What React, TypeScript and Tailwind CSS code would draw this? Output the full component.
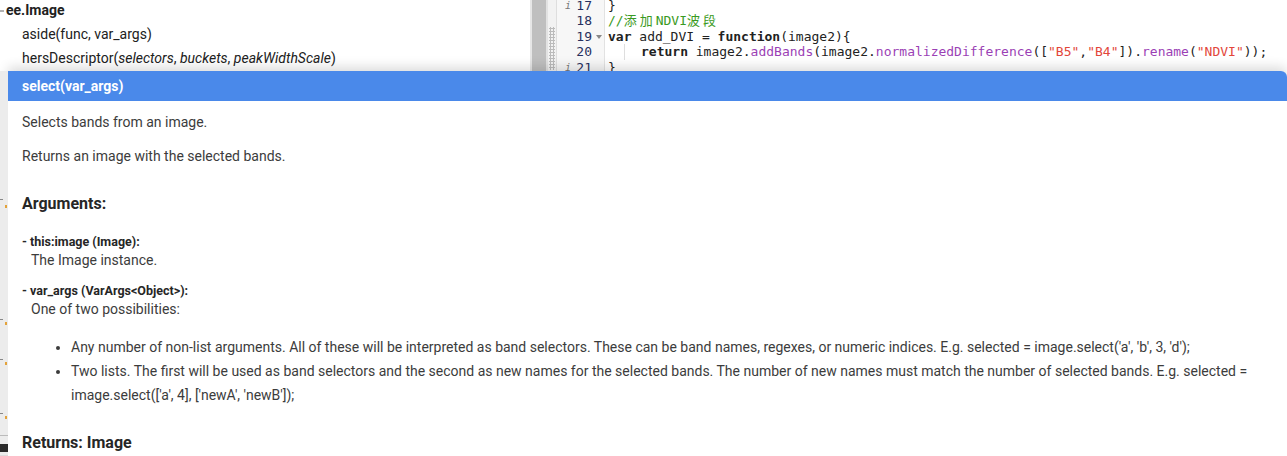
import React from "react";

const font = { fontFamily: "Roboto, 'Liberation Sans', Arial, sans-serif" };
const mono = {
  fontFamily: "'DejaVu Sans Mono', 'Noto Sans CJK SC', monospace",
};

const TreePanel: React.FC = () => (
  <div className="w-[530px] shrink-0 bg-white text-[14px] text-[#212121]" style={font}>
    <div className="flex h-[21px] items-center">
      <svg className="ml-[-3px] h-[8px] w-[8px]" viewBox="0 0 8 8">
        <path d="M1 4h6" stroke="#666" strokeWidth="1" />
      </svg>
      <span className="ml-[1px] font-bold">ee.Image</span>
    </div>
    <div className="mt-[1px] flex h-[24px] items-center pl-[22px]">
      aside(func, var_args)
    </div>
    <div className="flex h-[24px] items-center pl-[22px]">
      <span>
        hersDescriptor(<i>selectors</i>, <i>buckets</i>, <i>peakWidthScale</i>)
      </span>
    </div>
  </div>
);

const Cjk: React.FC<{ children: string }> = ({ children }) => (
  <span className="tracking-[3px]">{children}</span>
);

const codeLines: { n: number; info?: boolean; fold?: boolean; el: React.ReactNode }[] = [
  { n: 17, info: true, el: <span>{"}"}</span> },
  {
    n: 18,
    el: (
      <span className="text-[#3a9a22]">
        //<Cjk>添加</Cjk>NDVI<Cjk>波段</Cjk>
      </span>
    ),
  },
  {
    n: 19,
    fold: true,
    el: (
      <span>
        <b>var</b> add_DVI = <b>function</b>(image2){"{"}
      </span>
    ),
  },
  {
    n: 20,
    el: (
      <span className="flex h-full items-center">
        <span className="ml-[16px] h-full w-[17px] border-l border-[#dedede]" />
        <span>
          <b>return</b> image2.<span className="text-[#9b3fb5]">addBands</span>(image2.
          <span className="text-[#9b3fb5]">normalizedDifference</span>([
          <span className="text-[#e2463a]">"B5"</span>,<span className="text-[#e2463a]">"B4"</span>]).
          <span className="text-[#9b3fb5]">rename</span>(<span className="text-[#e2463a]">"NDVI"</span>));
        </span>
      </span>
    ),
  },
  { n: 21, info: true, el: <span>{"}"}</span> },
];

const CodePanel: React.FC = () => (
  <div className="flex flex-1 bg-white">
    <div className="w-[2px] bg-[#e6e6e6]" />
    <div className="w-[14px] bg-[#bfbfbf]" />
    <div className="w-[2px] bg-[#e2e2e2]" />
    <div className="relative w-[8px] bg-[#f2f2f2]">
      <div className="absolute left-[1px] top-[27px] h-[43px] w-[6px] bg-[radial-gradient(#bbb_1px,transparent_1.2px)] bg-[length:3px_3px]" />
    </div>
    <div className="w-[1px] bg-[#dedede]" />
    <div
      className="mt-[-2px] w-[48px] border-r border-[#e2e2e2] bg-[#f7f7f7] text-[13px] text-[#27305e]"
      style={mono}
    >
      {codeLines.map((l) => (
        <div key={l.n} className="relative flex h-[15.4px] items-center justify-end pr-[12px]">
          {l.info && (
            <span className="absolute left-[8px] text-[10px] italic text-[#777]">i</span>
          )}
          <span>{l.n}</span>
          {l.fold && (
            <svg className="absolute left-[39px] top-[6px] h-[4px] w-[6px]" viewBox="0 0 6 4">
              <path d="M0 0h6L3 4z" fill="#888" />
            </svg>
          )}
        </div>
      ))}
    </div>
    <div className="mt-[-2px] flex-1 pl-[3px] text-[13px] text-[#222]" style={mono}>
      {codeLines.map((l) => (
        <div key={l.n} className="flex h-[15.4px] items-center whitespace-pre">
          {l.el}
        </div>
      ))}
    </div>
  </div>
);

const SideStrip: React.FC = () => (
  <div className="relative w-[8px] bg-[#ececec]">
    {[134, 251, 291, 345].map((y) => (
      <div key={y} className="absolute left-[5px] h-[3px] w-[2px] bg-[#e3a33c]" style={{ top: y }} />
    ))}
    {[128, 248, 288, 342].map((y) => (
      <div key={y} className="absolute left-0 h-[1px] w-[3px] bg-[#888]" style={{ top: y }} />
    ))}
    <div className="absolute left-0 top-[364px] h-[1px] w-[8px] bg-[#bbb]" />
    <div className="absolute left-0 top-[373px] h-[8px] w-[8px] bg-[#2a2a2a]" />
    <div className="absolute left-0 top-[384px] h-[14px] w-[8px] bg-[#dcdcdc]" />
    <div className="absolute left-0 top-[401px] h-[22px] w-[8px] bg-[#1f1f1f]" />
    <div className="absolute left-0 top-[431px] h-[4px] w-[8px] bg-[#666]" />
  </div>
);

const Popup: React.FC = () => (
  <div
    className="flex h-full flex-col overflow-hidden rounded-tr-[6px] bg-white shadow-[0_-4px_12px_rgba(0,0,0,0.14)]"
    style={font}
  >
    <div className="flex h-[30px] shrink-0 items-center bg-[#4a89ea] pl-[14px] text-[14px] font-bold text-white">
      select(var_args)
    </div>
    <div className="pl-[14px] pr-[20px] text-[14px] leading-[20px] text-[#3c3c3c]">
      <p className="mt-[11px]">Selects bands from an image.</p>
      <p className="mt-[14px]">Returns an image with the selected bands.</p>
      <h3 className="mt-[28px] text-[16px] font-bold text-[#262626]">Arguments:</h3>
      <div className="mt-[19px] text-[12.5px] font-bold leading-[17px] text-[#262626]">
        - this:image (Image):
      </div>
      <div className="pl-[9px] leading-[20px]">The Image instance.</div>
      <div className="mt-[12px] text-[12.5px] font-bold leading-[17px] text-[#262626]">
        {"- var_args (VarArgs<Object>):"}
      </div>
      <div className="pl-[9px] leading-[20px]">One of two possibilities:</div>
      <ul className="mt-[16px] list-disc pl-[49px] leading-[24px]">
        <li>
          Any number of non-list arguments. All of these will be interpreted as band selectors. These
          can be band names, regexes, or numeric indices. E.g. selected = image.select('a', 'b', 3,
          'd');
        </li>
        <li>
          Two lists. The first will be used as band selectors and the second as new names for the
          selected bands. The number of new names must match the number of selected bands. E.g.
          selected = image.select(['a', 4], ['newA', 'newB']);
        </li>
      </ul>
      <h3 className="mt-[26px] text-[16px] font-bold text-[#262626]">Returns: Image</h3>
    </div>
  </div>
);

export default function App() {
  return (
    <div className="relative h-[456px] w-[1287px] overflow-hidden bg-white">
      <div className="flex h-[71px] overflow-hidden">
        <TreePanel />
        <CodePanel />
      </div>
      <div className="absolute bottom-0 left-0 right-0 top-[71px] flex">
        <SideStrip />
        <div className="flex-1">
          <Popup />
        </div>
      </div>
    </div>
  );
}
